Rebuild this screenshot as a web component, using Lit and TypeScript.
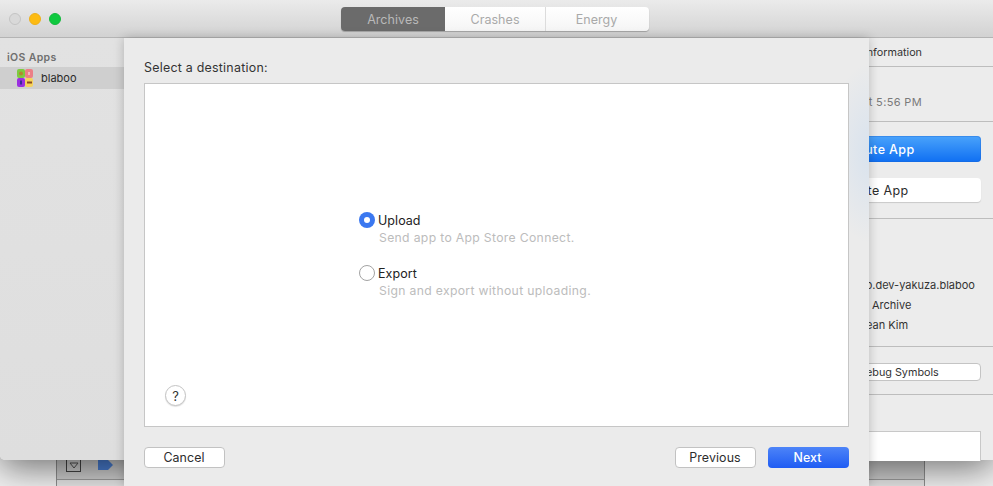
import { LitElement, html, css } from "lit";
import { customElement } from "lit/decorators.js";

@customElement("app-root")
export class AppRoot extends LitElement {
  static styles = css`
    :host {
      display: block;
      position: relative;
      width: 993px;
      height: 486px;
      overflow: hidden;
      background: #f2f2f2;
      font-family: "Inter", "Liberation Sans", sans-serif;
      font-size: 12px;
      color: #2c2c2c;
    }
    .back {
      position: absolute;
      left: 56px;
      right: 68px;
      top: 440px;
      bottom: 0;
      background: #cfcfcf;
      border-left: 1px solid #8f8f8f;
      border-right: 1px solid #8f8f8f;
      display: flex;
      flex-direction: column;
    }
    .back-row {
      height: 40px;
      flex: none;
      border-bottom: 1px solid #9c9c9c;
      display: flex;
      align-items: flex-end;
      gap: 17px;
      padding: 0 0 0 9px;
      box-sizing: border-box;
    }
    .toggle {
      width: 15px;
      height: 14px;
      border: 1px solid #444;
      box-sizing: border-box;
      display: flex;
      align-items: center;
      justify-content: center;
      margin-bottom: 7px;
    }
    .tag { margin-bottom: 9px; display: block; }
    .back-rest { flex: 1; background: #e6e6e6; }
    .window {
      position: absolute;
      left: 0;
      top: 0;
      width: 993px;
      height: 460px;
      border-radius: 0 0 5px 5px;
      background: #ececec;
      box-shadow: 0 8px 36px rgba(0, 0, 0, 0.55);
      display: flex;
      flex-direction: column;
      overflow: hidden;
    }
    .titlebar {
      height: 38px;
      flex: none;
      box-sizing: border-box;
      border-bottom: 1px solid #b4b4b4;
      background: linear-gradient(#ebebeb, #d2d2d2);
      position: relative;
      display: flex;
      align-items: center;
      padding-left: 9px;
      gap: 8px;
    }
    .light { width: 12px; height: 12px; border-radius: 50%; box-sizing: border-box; }
    .l1 { background: #d9d9d9; border: 1px solid #c4c4c4; }
    .l2 { background: #fdbb12; border: 1px solid #eeb01a; }
    .l3 { background: #0fc93f; border: 1px solid #14b93d; }
    .segs {
      position: absolute;
      left: 341px;
      top: 7px;
      width: 308px;
      height: 24px;
      display: flex;
      border-radius: 4px;
      overflow: hidden;
      box-shadow: 0 1px 1px rgba(0, 0, 0, 0.25);
    }
    .seg {
      display: flex;
      align-items: center;
      justify-content: center;
      background: linear-gradient(#ffffff, #f5f5f5);
      color: #a9a9a9;
      font-size: 12.5px;
      letter-spacing: 0.05px;
    }
    .seg.on { width: 104px; background: #6b6b6b; color: #b9b9b9; }
    .seg.c { width: 101px; border-right: 1px solid #dcdcdc; box-sizing: border-box; }
    .seg.e { width: 103px; padding-right: 2px; box-sizing: border-box; }
    .body { flex: 1; display: flex; min-height: 0; }
    .sidebar {
      width: 124px;
      flex: none;
      background: linear-gradient(#e2e2e2, #dedede);
      padding-top: 13px;
      box-sizing: border-box;
    }
    .side-head {
      font-size: 10.5px;
      font-weight: 600;
      color: #6f6f6f;
      letter-spacing: 0.35px;
      padding-left: 7px;
      height: 16px;
      line-height: 14px;
    }
    .side-item {
      height: 22px;
      background: #cfcfcf;
      display: flex;
      align-items: center;
      padding-left: 17px;
      gap: 8px;
      font-size: 11px;
      color: #2a2a2a;
    }
    .side-item svg { display: block; }
    .panel {
      position: absolute;
      left: 745px;
      top: 38px;
      width: 248px;
      height: 422px;
      background: #ececec;
      display: flex;
      flex-direction: column;
    }
    .sec { border-bottom: 1px solid #bdbdbd; box-sizing: border-box; flex: none; }
    .s-head { height: 29px; display: flex; align-items: center; justify-content: flex-end; padding-right: 71px; font-size: 10.8px; color: #333; }
    .s-date { height: 55px; display: flex; align-items: center; justify-content: flex-end; padding-right: 71px; font-size: 11px; letter-spacing: 0.35px; color: #7a7a7a; padding-top: 16px; }
    .s-btns { height: 97px; padding: 14px 12px 0 12px; display: flex; flex-direction: column; gap: 16px; }
    .pbtn { height: 26px; border-radius: 4px; display: flex; align-items: center; justify-content: center; font-size: 12.5px; letter-spacing: 0.4px; box-sizing: border-box; }
    .pbtn.blue { background: linear-gradient(#4aa3fb, #0f6ff2); color: #fff; font-weight: 500; box-shadow: 0 0 0 1px rgba(30, 100, 210, 0.35) inset; }
    .pbtn.white { height: 24px; padding-top: 1px; background: #fff; color: #2c2c2c; box-shadow: 0 1px 1px rgba(0, 0, 0, 0.15); }
    .s-info { height: 128px; padding-top: 56px; display: flex; flex-direction: column; align-items: flex-start; font-size: 11px; color: #333; }
    .info { height: 20px; display: flex; align-items: center; }
    .i1 { padding-left: 118px; }
    .i2 { padding-left: 127px; }
    .i3 { padding-left: 113px; }
    .s-dbg { height: 48px; display: flex; align-items: center; padding: 3px 12px 0 12px; }
    .dbtn { flex: 1; height: 18px; background: #fff; border: 1px solid #c4c4c4; border-radius: 4px; font-size: 10.8px; color: #333; display: flex; align-items: center; justify-content: flex-start; padding-left: 46px; box-sizing: border-box; }
    .s-note { padding: 36px 12px 0 12px; flex: 1; }
    .note { height: 30px; background: #fff; border: 1px solid #c8c8c8; border-bottom: 0; box-sizing: border-box; }
    .sheet {
      position: absolute;
      left: 124px;
      top: 38px;
      width: 745px;
      height: 448px;
      box-sizing: border-box;
      padding: 20px 20px 18px;
      background:
        radial-gradient(ellipse 40px 90px at 100% 115px, rgba(170, 205, 245, 0.28), rgba(170, 205, 245, 0)),
        #ebebeb;
      box-shadow: 0 0 10px rgba(0, 0, 0, 0.22);
      display: flex;
      flex-direction: column;
    }
    .sheet-title { height: 25px; font-size: 12.4px; letter-spacing: 0.25px; color: #333; line-height: 19px; }
    .box {
      flex: 1;
      background: #fff;
      border: 1px solid #c6c6c6;
      position: relative;
      display: flex;
      align-items: center;
      padding-left: 214px;
    }
    .choices { display: flex; flex-direction: column; gap: 18px; }
    .choice { display: grid; grid-template-columns: 16px auto; column-gap: 3px; align-items: center; }
    .radio { width: 16px; height: 16px; border-radius: 50%; box-sizing: border-box; background: #fff; border: 1px solid #a3a3a3; display: flex; align-items: center; justify-content: center; }
    .radio.on { background: #3b78f0; border: 0; }
    .radio.on::after { content: ""; width: 6px; height: 6px; border-radius: 50%; background: #fff; }
    .c-label { font-size: 12.5px; letter-spacing: 0.05px; color: #222; line-height: 17px; padding-top: 1px; }
    .c-sub { grid-column: 2; font-size: 12.2px; letter-spacing: 0.33px; color: #bcbcbc; line-height: 17px; margin-left: 1px; }
    .help {
      position: absolute;
      left: 20px;
      bottom: 20px;
      width: 21px;
      height: 21px;
      border-radius: 50%;
      background: #fff;
      border: 1px solid #c4c4c4;
      box-shadow: 0 1px 1px rgba(0, 0, 0, 0.12);
      box-sizing: border-box;
      display: flex;
      align-items: center;
      justify-content: center;
      font-size: 13px;
      color: #333;
    }
    .foot { height: 21px; margin-top: 20px; display: flex; gap: 12px; }
    .btn { width: 81px; height: 21px; box-sizing: border-box; border-radius: 4px; background: #fff; border: 1px solid #c2c2c2; display: flex; align-items: center; justify-content: center; font-size: 12.4px; letter-spacing: 0.1px; color: #2c2c2c; padding-right: 1px; }
    .btn.next { background: linear-gradient(#4d84f8, #1f5cf3); border: 0; color: #fff; font-weight: 500; padding-right: 2px; }
    .spacer { flex: 1; }
  `;

  render() {
    return html`
      <div class="back">
        <div class="back-row">
          <span class="toggle">
            <svg width="10" height="7" viewBox="0 0 10 7"><path d="M1 1h8L5 6z" fill="none" stroke="#555" stroke-width="1" /></svg>
          </span>
          <svg class="tag" width="15" height="10" viewBox="0 0 15 10"><path d="M0 0h10l5 5-5 5H0z" fill="#4a7fd4" /></svg>
        </div>
        <div class="back-rest"></div>
      </div>
      <div class="window">
        <div class="titlebar">
          <span class="light l1"></span><span class="light l2"></span><span class="light l3"></span>
          <div class="segs">
            <div class="seg on">Archives</div>
            <div class="seg c">Crashes</div>
            <div class="seg e">Energy</div>
          </div>
        </div>
        <div class="body">
          <div class="sidebar">
            <div class="side-head">iOS Apps</div>
            <div class="side-item">
              <svg width="16" height="18" viewBox="0 0 16 18">
                <rect x="0" y="0" width="8" height="9" rx="2" fill="#7ecb3f" />
                <rect x="8" y="0" width="8" height="9" rx="2" fill="#ec7f86" />
                <rect x="0" y="9" width="8" height="9" rx="2" fill="#9a2fe0" />
                <rect x="8" y="9" width="8" height="9" rx="2" fill="#f6d35c" />
                <circle cx="4" cy="4.5" r="2" fill="#b2882f" />
                <rect x="11" y="3" width="2" height="3" fill="#f4b6bb" />
                <rect x="3" y="11.5" width="2" height="4" fill="#3a2a9a" />
                <rect x="10" y="12.5" width="5" height="2" fill="#8a4b22" />
              </svg>
              <span>blaboo</span>
            </div>
          </div>
        </div>
      </div>
      <div class="panel">
        <div class="sec s-head">Archive Information</div>
        <div class="sec s-date">at 5:56 PM</div>
        <div class="sec s-btns">
          <div class="pbtn blue">Distribute App</div>
          <div class="pbtn white">Validate App</div>
        </div>
        <div class="sec s-info">
          <div class="info i1">io.dev-yakuza.blaboo</div>
          <div class="info i2">Archive</div>
          <div class="info i3">Dean Kim</div>
        </div>
        <div class="sec s-dbg"><div class="dbtn">Download Debug Symbols</div></div>
        <div class="s-note"><div class="note"></div></div>
      </div>
      <div class="sheet">
        <div class="sheet-title">Select a destination:</div>
        <div class="box">
          <div class="choices">
            <div class="choice">
              <span class="radio on"></span><span class="c-label">Upload</span>
              <span class="c-sub">Send app to App Store Connect.</span>
            </div>
            <div class="choice">
              <span class="radio"></span><span class="c-label">Export</span>
              <span class="c-sub">Sign and export without uploading.</span>
            </div>
          </div>
          <div class="help">?</div>
        </div>
        <div class="foot">
          <div class="btn">Cancel</div>
          <div class="spacer"></div>
          <div class="btn">Previous</div>
          <div class="btn next">Next</div>
        </div>
      </div>
    `;
  }
}
